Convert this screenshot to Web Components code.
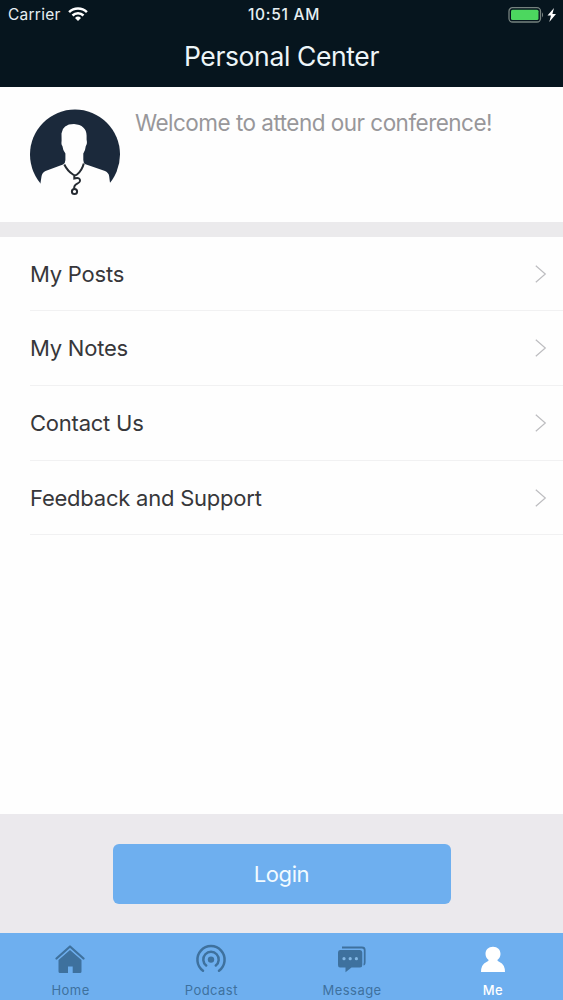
<!DOCTYPE html>
<html lang="en">
<head>
<meta charset="utf-8">
<title>Personal Center</title>
<style>
html,body{margin:0;height:100%;background:#fefefe}
body{font-family:Inter,"Liberation Sans",sans-serif;overflow:hidden}
</style>
</head>
<body>
<personal-center></personal-center>
<script>
const define = (name, html) => customElements.define(name, class extends HTMLElement {
  constructor() {
    super();
    const t = document.createElement('template');
    t.innerHTML = html;
    this.attachShadow({ mode: 'open' }).append(t.content.cloneNode(true));
  }
});

define('status-bar', `
<style>
:host{display:grid;grid-template-columns:1fr auto 1fr;align-items:center;height:28px;padding:0 6px 0 8px;color:#e6eff3;font-size:15.5px;line-height:28px}
.left,.right{display:flex;align-items:center}
.left{gap:7px}
.carrier{font-size:15.5px;letter-spacing:.25px}
.right{justify-content:flex-end}
.time{font-weight:500;letter-spacing:.7px;padding-left:3px;padding-top:1px}
.left{padding-top:1px}
svg{display:block}
.left svg{margin-top:-2px}
</style>
<div class="left"><span class="carrier">Carrier</span>
<svg width="20" height="14" viewBox="0 0 20 14" fill="none" stroke="#fff" stroke-width="2.5"><path d="M1.1 5.2a12.7 12.7 0 0 1 17.8 0"/><path d="M4.5 8.5a7.800 7.800 0 0 1 11 0"/><path d="M10 14l-3-3a4.300 4.300 0 0 1 6 0z" fill="#fff" stroke="none"/></svg></div>
<span class="time">10:51 AM</span>
<div class="right"><svg width="49" height="18" viewBox="0 0 49 18"><rect x="1" y="1.700" width="31.500" height="14.300" rx="3.500" fill="none" stroke="#76827f" stroke-width="1.300"/><rect x="3" y="3.700" width="27.500" height="10.300" rx="1.500" fill="#4cd75f"/><path d="M34 6.200q2.200 2.700 0 5.400z" fill="#76827f"/><path d="M46 2l-6.500 7.600h3.500L41.300 16l6.700-8h-3.600z" fill="#fff"/></svg></div>`);

define('nav-title', `
<style>
:host{display:flex;justify-content:center;align-items:center;height:59px;box-sizing:border-box;padding-bottom:4px;font-size:26.5px;line-height:30px;color:#edf5f8}
span{letter-spacing:var(--title-track,0)}
</style><span><slot></slot></span>`);

define('user-avatar', `
<style>:host{display:block;width:90px;height:90px}svg{display:block}</style>
<svg width="90" height="90" viewBox="0 0 90 90">
<defs><clipPath id="c"><path d="M0 0H90V78.500H0z"/></clipPath></defs>
<circle cx="45" cy="45.500" r="45" fill="#1b293b" clip-path="url(#c)"/>
<path d="M8 90L11.500 67.500Q12 63.500 15.500 62L33 55.500Q35.400 54.300 35.400 51V44.500Q32.800 41 32.400 37Q31.100 36 31.600 31.500L31.500 24.500Q32.500 15 44 15Q56.200 16 56.600 26.500V30.500Q57.500 35 55.800 37Q55.400 41.500 53.300 44.500V51Q53.300 54.300 55.500 55.300L75 62Q79 64 79.200 67.500L82 90z" fill="#fefefe"/>
<g fill="none" stroke="#252b32" stroke-width="2"><path d="M34.300 55.500Q37.500 62 43 65.500Q45 67 47 65.500Q52 61.500 53.800 54.500M44.300 66V69.500Q50.500 68 50 72C49.500 75.500 43 74 44.300 80"/><circle cx="44.500" cy="82.500" r="2.600"/></g>
</svg>`);

define('profile-panel', `
<style>
:host{display:flex;gap:15px;height:134.700px;box-sizing:border-box;padding:22px 30px 0;background:#fefefe}
p{margin:0;font-size:22.5px;line-height:28px;color:#98979a;letter-spacing:var(--welcome-track,0);white-space:nowrap}
</style><user-avatar></user-avatar><p><slot></slot></p>`);

define('menu-row', `
<style>
:host{display:block;padding-left:30px;height:74.700px}
.row{display:flex;align-items:center;justify-content:space-between;height:100%;box-sizing:border-box;border-bottom:1px solid #f1f1f2;padding-right:16px;font-size:22px;line-height:28px;color:#37373a}
span{letter-spacing:var(--row-track,0)}
svg{display:block}
</style><div class="row"><span><slot></slot></span><svg width="12" height="18" viewBox="0 0 12 18" fill="none" stroke="#bdbdc0" stroke-width="1.200"><path d="M.8 .8L10.300 9L.8 17.200"/></svg></div>`);

define('login-area', `
<style>
:host{display:flex;justify-content:center;align-items:center;height:119px;background:#ebe9ed}
button{all:unset;box-sizing:border-box;width:338px;height:60px;border-radius:6px;background:#6eafef;color:#f2fbff;text-align:center;font-size:22px;line-height:60px;letter-spacing:var(--login-track,0)}
</style><button><slot></slot></button>`);

define('tab-item', `
<style>
:host{display:flex;flex-direction:column;align-items:center;color:#3e719e;padding-top:11px}
:host([active]){color:#fff}
.icon{height:32px;display:flex}
.label{font-size:13px;line-height:16px;margin-top:6px;letter-spacing:.45px;margin-right:-.45px;font-weight:400}
:host([active]) .label{font-weight:500}
</style><div class="icon"><slot name="icon"></slot></div><div class="label"><slot></slot></div>`);

define('tab-bar', `
<style>
:host{display:grid;grid-template-columns:repeat(4,1fr);height:67px;background:#6eafef}
svg{display:block}
</style>
<tab-item><svg slot="icon" width="32" height="32" viewBox="0 0 32 32"><path d="M2.500 14.500L16 2.500L29.500 14.500" fill="none" stroke="currentColor" stroke-width="2.300" stroke-linecap="round" stroke-linejoin="round"/><path d="M4.500 16L16 6L27.500 16V27.500Q27.500 29 26 29H18.700V22.500H14V29H6Q4.500 29 4.500 27.500z" fill="currentColor"/></svg>Home</tab-item>
<tab-item><svg slot="icon" width="32" height="32" viewBox="0 0 32 32" fill="none" stroke="currentColor" stroke-linecap="round"><circle cx="16" cy="15.600" r="3.200" fill="currentColor" stroke="none"/><path d="M11.200 21.500A7.700 7.700 0 1 1 20.800 21.500" stroke-width="2.500"/><path d="M8 26.700A13.600 13.600 0 1 1 24 26.700" stroke-width="2.500"/></svg>Podcast</tab-item>
<tab-item><svg slot="icon" width="32" height="32" viewBox="0 0 32 32"><path d="M6 3.500H26Q28.700 3.500 28.700 6V18Q28.700 20.500 27.500 20.500" fill="none" stroke="currentColor" stroke-width="1.800"/><path d="M4 6H24Q26.300 6 26.300 8.500V21Q26.300 23.500 24 23.500H15.500L9.500 28.300V23.500H4Q2 23.500 2 21V8.500Q2 6 4 6z" fill="currentColor"/><g fill="#83b7e4"><circle cx="8" cy="14.700" r="1.600"/><circle cx="14.200" cy="14.700" r="1.600"/><circle cx="20.400" cy="14.700" r="1.600"/></g></svg>Message</tab-item>
<tab-item active><svg slot="icon" width="32" height="32" viewBox="0 0 32 32"><path d="M16 2.800C20.500 2.800 23.500 5.800 23.500 10C23.500 13 21.800 14.700 20.300 16Q20.300 17 22.500 18Q28 20.500 28 28H4Q4 20.500 9.500 18Q11.700 17 11.700 16C10.200 14.700 8.500 13 8.500 10C8.500 5.800 11.500 2.800 16 2.800z" fill="currentColor"/></svg>Me</tab-item>`);

define('personal-center', `
<style>
:host{display:flex;flex-direction:column;height:1000px;background:#fefefe;--title-track:-.38px;--welcome-track:-.52px;--row-track:-.23px;--login-track:-.4px}
header{background:#06151e;height:87px}
.gap{height:15px;background:#ebeaec}
main{flex:1}
</style>
<header><status-bar></status-bar><nav-title>Personal Center</nav-title></header>
<profile-panel>Welcome to attend our conference!</profile-panel>
<div class="gap"></div>
<main><menu-row>My Posts</menu-row><menu-row>My Notes</menu-row><menu-row>Contact Us</menu-row><menu-row>Feedback and Support</menu-row></main>
<login-area>Login</login-area>
<tab-bar></tab-bar>`);
</script>
</body>
</html>
